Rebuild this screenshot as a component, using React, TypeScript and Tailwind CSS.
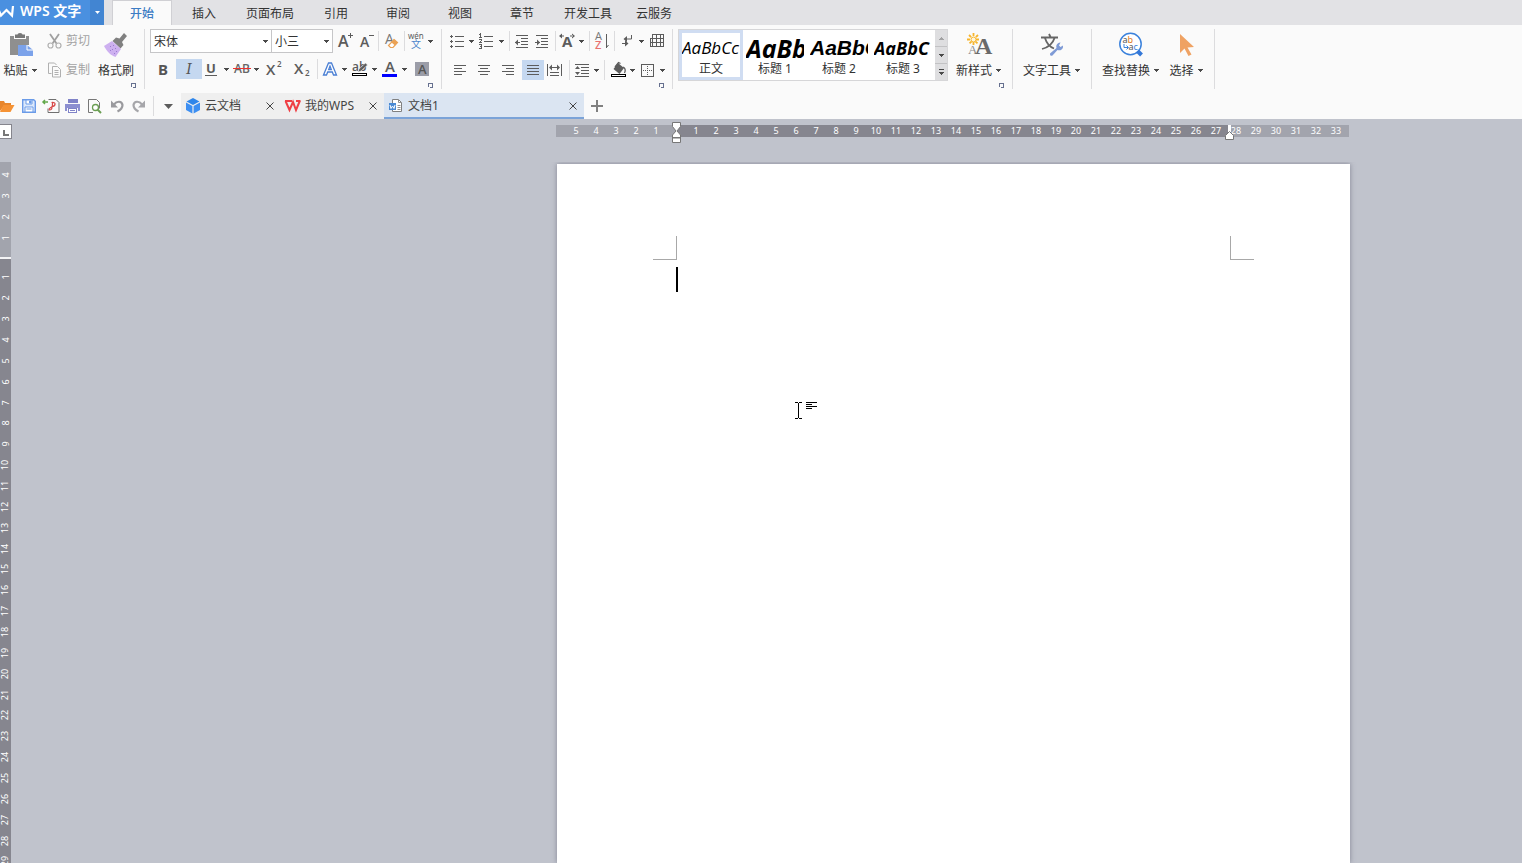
import React, { type ReactNode } from "react";

const G = "#5c5c5c";

function Caret({ className = "" }: { className?: string }) {
  return (
    <svg className={`h-[3px] w-[5px] shrink-0 ${className}`} viewBox="0 0 5 3" fill="#4a4a4a" shapeRendering="crispEdges">
      <path d="M0 0h5v1h-1v1h-1v1h-1v-1h-1v-1h-1z" />
    </svg>
  );
}

function Tool({ label, w, on, children }: { label: string; w: string; on?: boolean; children: ReactNode }) {
  return (
    <button
      aria-label={label}
      title={label}
      className={`flex h-5 shrink-0 items-center justify-center ${w} ${on ? "bg-[#c5d8f0]" : ""}`}
    >
      {children}
    </button>
  );
}

function Sep({ w }: { w: string }) {
  return (
    <div className={`flex h-5 shrink-0 justify-center ${w}`}>
      <div className="w-px bg-[#dcdcde]" />
    </div>
  );
}

function Art({ w, h, children }: { w: number; h: number; children: ReactNode }) {
  return (
    <svg width={w} height={h} viewBox={`0 0 ${w} ${h}`} fill="none" className="shrink-0 overflow-visible" aria-hidden="true">
      {children}
    </svg>
  );
}

/* Horizontal strokes given as [x, y, width] triples. */
function Bars({ rows, fill = G }: { rows: number[][]; fill?: string }) {
  return (
    <g fill={fill} shapeRendering="crispEdges">
      {rows.map(([x, y, w], i) => (
        <rect key={i} x={x} y={y} width={w} height={1} />
      ))}
    </g>
  );
}

function Launcher({ className }: { className: string }) {
  return (
    <button aria-label="更多设置" className={`absolute bottom-0 ${className}`}>
      <svg className="h-[6px] w-[6px]" viewBox="0 0 6 6" shapeRendering="crispEdges" fill="#66708f">
        <path d="M0 0h5v1h-4v3h-1zM2 5h3v-3h-1v2h-2zM5 2h-1v-1h1z" />
      </svg>
    </button>
  );
}

function Group({ className, children }: { className: string; children: ReactNode }) {
  return <section className={`relative h-[60px] shrink-0 border-r border-[#dcdcde] ${className}`}>{children}</section>;
}

function Big({ icon, label, caret, className = "" }: { icon: ReactNode; label: string; caret?: boolean; className?: string }) {
  return (
    <button className={`flex shrink-0 flex-col items-center whitespace-nowrap text-[#333] ${className}`}>
      <span className="flex h-8 items-center">{icon}</span>
      <span className="flex h-[19px] items-center gap-1">
        {label}
        {caret && <Caret />}
      </span>
    </button>
  );
}

const PasteIcon = (
  <Art w={23} h={24}>
    <path d="M1 3h4v3h12v-3h3v9h-5v10h-14z" fill="#8f8f8f" />
    <path d="M6 1.5h2.500a2.500 1.500 0 0 1 5 0h2.500v3.500h-10z" fill="#777" />
    <path d="M9 12h9l6 5v6h-15z" fill="#7ba2ea" />
    <path d="M18 12v5h6" stroke="#fff" strokeWidth="1" />
  </Art>
);

const BrushIcon = (
  <Art w={24} h={24}>
    <path d="M20 0l3 3-5 6 1.500 3-3 3.500-8-7.500 3.500-3.500 3.500 1z" fill="#808080" />
    <path d="M8 8l9 8-5.500 8c-5-1.500-9-6-11.500-11z" fill="#cdb0f0" />
    <g fill="#9b7bd0">
      {[[6, 13], [9, 12], [11, 15], [8, 16], [12, 18], [10, 20], [6, 17]].map(([x, y], i) => (
        <rect key={i} x={x} y={y} width="1" height="1" />
      ))}
    </g>
  </Art>
);

const TextToolIcon = (
  <Art w={24} h={24}>
    <path d="M1 4.500h17M9 1l1.500 3M5 5c1.500 5 5 9 9 10.500M14.500 5c-1.500 5-5 9-12.500 11" stroke="#666" strokeWidth="1.800" />
    <path d="M10 20.500l6.500-5.500a4 4 0 0 1 4-5.500l-1.500 3 1.500 1.500 2.500-1.500a4 4 0 0 1-5.500 4.500l-5 5.500q-3 1-2.500-2z" fill="#7f9bd6" />
  </Art>
);

const FindIcon = (
  <Art w={25} h={26}>
    <circle cx="12.500" cy="12" r="10.700" stroke="#3b82dc" strokeWidth="1.500" fill="#fff" />
    <path d="M19.500 19l4 4" stroke="#3478d8" strokeWidth="4" />
    <text x="4.500" y="10.500" fontSize="9" fontFamily="Noto Sans" fill="#555">a<tspan fill="#e07a20">b</tspan></text>
    <text x="10.500" y="18" fontSize="9" fontFamily="Noto Sans" fill="#555">a<tspan fill="#3b82dc">c</tspan></text>
    <path d="M6 12v3.500h4M8.500 13.500l2 2-2 2" stroke="#3b82dc" />
  </Art>
);

const SelectIcon = (
  <Art w={12} h={22}>
    <path d="M0 0v19l4.500-4.500 4 7.500 3-1.500-4-7 6.500-.5z" fill="#efa263" />
  </Art>
);

const NewStyleIcon = (
  <Art w={24} h={24}>
    <g stroke="#f7b52c" strokeWidth="1.800" strokeDasharray="3 1.500">
      <path d="M6.500 0v13M0 6.500h13M2 2l9 9M11 2l-9 9" />
    </g>
    <circle cx="6.500" cy="6.500" r="2.500" fill="#fff6dc" stroke="#f7b52c" />
    <text x="1" y="21" fontSize="13" fontFamily="Liberation Serif" fill="#8a8a8a">A</text>
    <text x="8" y="21" fontSize="24" fontFamily="Liberation Serif" fontWeight="700" fill="#6a6a6a">A</text>
  </Art>
);

function Ribbon() {
  return (
    <div className="flex h-[68px] shrink-0 bg-[#fafafa] pt-1 text-[12px] leading-5 text-[#333]">
      <Group className="flex w-[145px]">
        <Big icon={PasteIcon} label="粘贴" caret className="w-10" />
        <div className="ml-[7px] flex w-12 flex-col gap-2 pt-px text-[#a3a3a3]">
          <button className="flex h-[22px] items-center gap-1 whitespace-nowrap">
            <Art w={15} h={16}>
              <path d="M3 1l6.500 9.500M12 1l-6.500 9.500" stroke="#a0a0a0" strokeWidth="1.800" />
              <circle cx="3.500" cy="12.500" r="2.500" stroke="#b0b0b0" strokeWidth="1.200" />
              <circle cx="11.500" cy="12.500" r="2.500" stroke="#b0b0b0" strokeWidth="1.200" />
            </Art>
            剪切
          </button>
          <button className="flex h-[20px] items-center gap-1 whitespace-nowrap">
            <Art w={15} h={16}>
              <path d="M4.500 11.500h-3v-10.500h6l2 2M5.500 4.500h5l3 3v7.500h-8zM7.500 8.500h4M7.500 10.500h4M7.500 12.500h4" stroke="#b0b0b0" />
            </Art>
            复制
          </button>
        </div>
        <Big icon={BrushIcon} label="格式刷" className="w-[42px]" />
        <Launcher className="right-[7px]" />
      </Group>

      <Group className="w-[297px] pl-[5px]">
        <div className="flex h-6 items-center">
          <label className="relative flex items-center">
            <select aria-label="字体" className="h-6 w-[122px] appearance-none border border-[#c6c6c8] bg-white pt-px pl-[3px] text-[12px] outline-none">
              <option>宋体</option>
              <option>黑体</option>
            </select>
            <Caret className="pointer-events-none absolute right-1" />
          </label>
          <label className="relative -ml-px flex items-center">
            <select aria-label="字号" className="h-6 w-[62px] appearance-none border border-[#c6c6c8] bg-white pt-px pl-[3px] text-[12px] outline-none">
              <option>小三</option>
              <option>四号</option>
            </select>
            <Caret className="pointer-events-none absolute right-1" />
          </label>
          <Tool label="增大字号" w="w-6">
            <Art w={16} h={18}>
              <text x="1" y="15" fontSize="16" fontWeight="600" fontFamily="Open Sans" fill={G}>A</text>
              <path d="M11 3.500h5M13.500 1v5" stroke={G} />
            </Art>
          </Tool>
          <Tool label="减小字号" w="w-5">
            <Art w={16} h={18}>
              <text x="1" y="15" fontSize="14" fontWeight="600" fontFamily="Open Sans" fill={G}>A</text>
              <path d="M10 3.500h5" stroke={G} />
            </Art>
          </Tool>
          <Sep w="w-0.5" />
          <Tool label="清除格式" w="w-6">
            <Art w={14} h={18}>
              <text x="1" y="12" fontSize="14" fontFamily="Open Sans" fill="#777">A</text>
              <path d="M10 7.500l3.500 3-4.500 5h-2.500l-2-2z" fill="#fff" stroke="#eba254" strokeWidth="1.200" />
              <path d="M10 7.500l3.500 3-2.500 3-3.500-3z" fill="#eba254" />
            </Art>
          </Tool>
          <Sep w="w-0.5" />
          <Tool label="拼音指南" w="w-[22px]">
            <Art w={14} h={18}>
              <text x="-1" y="7" fontSize="8" fontFamily="Noto Sans" fill={G}>wén</text>
              <text x="2" y="16" fontSize="10" fontFamily="Noto Sans CJK SC" fill="#4d86cc">文</text>
            </Art>
          </Tool>
          <Tool label="拼音选项" w="w-1.5"><Caret /></Tool>
        </div>
        <div className="mt-1.5 flex h-5">
          <Tool label="加粗" w="w-[26px]"><b className="font-['Noto_Sans',sans-serif] text-[15px] text-[#555]">B</b></Tool>
          <Tool label="倾斜" w="w-[26px]" on><i className="font-['DejaVu_Serif',serif] text-[14px] text-[#555]">I</i></Tool>
          <Tool label="下划线" w="w-[18px]">
            <Art w={12} h={16}>
              <text x="1" y="12" fontSize="13" fontWeight="700" fontFamily="Open Sans" fill={G}>U</text>
              <Bars rows={[[0, 14, 12]]} />
            </Art>
          </Tool>
          <Tool label="下划线选项" w="w-3"><Caret /></Tool>
          <Tool label="删除线" w="w-5">
            <Art w={18} h={16}>
              <text x="1" y="12" fontSize="12" fontWeight="600" fontFamily="Open Sans" fill="#666">AB</text>
              <path d="M0 7.500h18" stroke="#f03030" strokeWidth="1" />
            </Art>
          </Tool>
          <Tool label="删除线选项" w="w-2"><Caret /></Tool>
          <Tool label="上标" w="w-7">
            <Art w={16} h={18}>
              <text x="0" y="15" fontSize="15" fontWeight="600" fontFamily="Open Sans" fill={G}>X</text>
              <text x="11" y="7" fontSize="8" fontWeight="600" fontFamily="Open Sans" fill={G}>2</text>
            </Art>
          </Tool>
          <Tool label="下标" w="w-7">
            <Art w={16} h={18}>
              <text x="0" y="14" fontSize="15" fontWeight="600" fontFamily="Open Sans" fill={G}>X</text>
              <text x="11" y="16" fontSize="8" fontWeight="600" fontFamily="Open Sans" fill={G}>2</text>
            </Art>
          </Tool>
          <Sep w="w-0.5" />
          <Tool label="文字效果" w="w-6">
            <Art w={16} h={16}>
              <path d="M1.500 14l5-12h3l5 12h-3l-1.200-3h-4.600l-1.200 3zM6.700 8.500h2.600l-1.300-3.500z" stroke="#4a7fd4" strokeWidth="1.300" fill="#fff" />
            </Art>
          </Tool>
          <Tool label="文字效果选项" w="w-1"><Caret /></Tool>
          <Tool label="突出显示" w="w-[26px]">
            <Art w={15} h={16}>
              <text x="0" y="10" fontSize="12" fontWeight="600" fontFamily="Open Sans" fill={G}>ab</text>
              <path d="M6 11l1-3 6.500-6 2 2-6.500 6z" fill={G} stroke="#fafafa" strokeWidth=".5" />
              <rect x=".5" y="12.500" width="14" height="2" stroke="#000" fill="#fff" />
            </Art>
          </Tool>
          <Tool label="突出显示选项" w="w-1"><Caret /></Tool>
          <Tool label="字体颜色" w="w-[26px]">
            <Art w={15} h={16}>
              <text x="3" y="11" fontSize="15" fontWeight="600" fontFamily="Open Sans" fill={G}>A</text>
              <rect y="13" width="15" height="3" fill="#00f" />
            </Art>
          </Tool>
          <Tool label="字体颜色选项" w="w-1"><Caret /></Tool>
          <Tool label="字符底纹" w="w-8">
            <Art w={14} h={14}>
              <rect width="14" height="14" fill="#9b9da8" />
              <text x="3" y="12" fontSize="13" fontWeight="600" fontFamily="Open Sans" fill="#555">A</text>
            </Art>
          </Tool>
        </div>
        <Launcher className="right-[7px]" />
      </Group>

      <Group className="w-[231px] pl-1">
        <div className="flex h-6 items-center">
          <Tool label="项目符号" w="w-[22px]">
            <Art w={14} h={14}>
              <Bars rows={[[5, 2, 9], [5, 7, 9], [5, 12, 9], [0, 2, 3], [0, 7, 3], [0, 12, 3]]} />
              <path d="M1 1h1v3h-1zM1 6h1v3h-1zM1 11h1v3h-1z" fill={G} shapeRendering="crispEdges" />
            </Art>
          </Tool>
          <Tool label="项目符号选项" w="w-1.5"><Caret /></Tool>
          <Tool label="编号" w="w-6">
            <Art w={14} h={16}>
              <Bars rows={[[5, 3, 9], [5, 8, 9], [5, 13, 9], [0, 4, 3], [0, 1, 1], [0, 6, 3], [1, 8, 1], [0, 9, 3], [0, 11, 3], [1, 13, 2], [0, 15, 3]]} />
              <path d="M1 0h1v4h-1zM2 7h1v1h-1zM2 11h1v4h-1z" fill={G} shapeRendering="crispEdges" />
            </Art>
          </Tool>
          <Tool label="编号选项" w="w-1.5"><Caret /></Tool>
          <Sep w="w-2.5" />
          <Tool label="减少缩进量" w="w-4">
            <Art w={14} h={14}>
              <Bars rows={[[1, 1, 12], [6, 4, 7], [6, 7, 7], [6, 10, 7], [1, 13, 12], [0, 8, 5]]} />
              <path d="M3 5.500v6l-3-3z" fill={G} />
            </Art>
          </Tool>
          <Tool label="增加缩进量" w="w-6">
            <Art w={14} h={14}>
              <Bars rows={[[1, 1, 12], [6, 4, 7], [6, 7, 7], [6, 10, 7], [1, 13, 12], [0, 8, 5]]} />
              <path d="M2 5.500v6l3-3z" fill={G} />
            </Art>
          </Tool>
          <Sep w="w-0.5" />
          <Tool label="字符缩放" w="w-[22px]">
            <Art w={16} h={16}>
              <text x="3" y="14" fontSize="15" fontWeight="700" fontFamily="Open Sans" fill={G}>A</text>
              <path d="M0 3l3-2.500v5zM16 3l-3-2.500v5zM2 2.500h3v1h-3zM11 2.500h3v1h-3z" fill={G} />
            </Art>
          </Tool>
          <Tool label="字符缩放选项" w="w-1.5"><Caret /></Tool>
          <Sep w="w-2.5" />
          <Tool label="排序" w="w-3.5">
            <Art w={14} h={18}>
              <text x="1" y="8" fontSize="11" fontFamily="Open Sans" fill="#777">A</text>
              <text x="1" y="17" fontSize="11" fontWeight="600" fontFamily="Open Sans" fill="#e8716f">Z</text>
              <path d="M12.500 2v14M12.500 15.500l2-2.500" stroke={G} />
            </Art>
          </Tool>
          <Sep w="w-3" />
          <Tool label="显示段落标记" w="w-3.5">
            <Art w={12} h={14}>
              <path d="M10.500 1v4h-6M1 9.500h5" stroke={G} />
              <path d="M6 2v6l-3.500-3zM4 6.500v6l3.500-3z" fill={G} />
            </Art>
          </Tool>
          <Tool label="段落标记选项" w="w-3.5"><Caret /></Tool>
          <Tool label="表格" w="w-[18px]">
            <Art w={14} h={14}>
              <path d="M2.500.5h11v12h-11zM6.500.5v12M10.500.5v12M0 4.500h13.500M0 8.500h13.500M.5 12.500h2M.5 4v9" stroke={G} shapeRendering="crispEdges" />
            </Art>
          </Tool>
        </div>
        <div className="mt-[7px] flex h-5">
          <Tool label="左对齐" w="w-7">
            <Art w={12} h={12}><Bars rows={[[0, 1, 12], [0, 4, 8], [0, 7, 12], [0, 10, 8]]} /></Art>
          </Tool>
          <Tool label="居中" w="w-5">
            <Art w={12} h={12}><Bars rows={[[0, 1, 12], [2, 4, 8], [0, 7, 12], [2, 10, 8]]} /></Art>
          </Tool>
          <Tool label="右对齐" w="w-7">
            <Art w={12} h={12}><Bars rows={[[0, 1, 12], [4, 4, 8], [0, 7, 12], [4, 10, 8]]} /></Art>
          </Tool>
          <Tool label="两端对齐" w="w-[22px]" on>
            <Art w={12} h={12}><Bars rows={[[0, 1, 12], [0, 4, 12], [0, 7, 12], [0, 10, 12]]} /></Art>
          </Tool>
          <Tool label="分散对齐" w="w-5">
            <Art w={15} h={12}>
              <path d="M.5 0v12M14.500 0v12" stroke={G} />
              <Bars rows={[[3, 3, 9], [3, 8, 9], [3, 11, 9]]} />
              <path d="M5 .5v6l-3-3zM10 .5v6l3-3z" fill={G} />
            </Art>
          </Tool>
          <Sep w="w-2.5" />
          <Tool label="行距" w="w-4">
            <Art w={15} h={13}>
              <Bars rows={[[0, 0, 14], [6, 3, 8], [6, 6, 8], [6, 9, 8], [0, 12, 14]]} />
              <path d="M0 5l2.500-3 2.500 3zM0 8l2.500 3 2.500-3z" fill={G} />
            </Art>
          </Tool>
          <Tool label="行距选项" w="w-3"><Caret /></Tool>
          <Sep w="w-1" />
          <Tool label="底纹颜色" w="w-6">
            <Art w={15} h={16}>
              <path d="M7 1l6 5-4.500 6-6-5z" fill={G} />
              <path d="M4 5l3.500-4.500 2 1M12 5c2 1 3 3 1.500 6" stroke={G} strokeWidth="1.300" />
              <rect x=".5" y="12.500" width="14" height="2" stroke="#000" fill="#fff" />
            </Art>
          </Tool>
          <Tool label="底纹选项" w="w-1"><Caret /></Tool>
          <Tool label="边框" w="w-[26px]">
            <Art w={13} h={13}>
              <rect x=".5" y=".5" width="12" height="12" stroke={G} />
              <path d="M6.500 2v9M2 6.500h9" stroke={G} strokeDasharray="1 1" />
            </Art>
          </Tool>
          <Tool label="边框选项" w="w-1"><Caret /></Tool>
        </div>
        <Launcher className="right-[7px]" />
      </Group>

      <Group className="flex w-[340px] pl-[5px]">
        <div className="flex h-[52px] border border-[#d6d6d8] bg-white">
          <StyleCell name="正文" on sample="font-['Open_Sans',sans-serif] text-[17px] italic" text="AaBbCc" />
          <StyleCell name="标题 1" sample="font-['Open_Sans',sans-serif] text-[25px] font-bold italic" text="AaBb" />
          <StyleCell name="标题 2" sample="font-['Liberation_Sans',sans-serif] text-[21px] font-bold italic" text="AaBbC" />
          <StyleCell name="标题 3" sample="font-['Open_Sans',sans-serif] text-[18px] font-bold italic" text="AaBbC" />
          <div className="flex w-3 flex-col divide-y divide-[#c2c2c4] bg-[#dedee0]">
            <button aria-label="上一行" className="flex flex-1 items-center justify-center"><Caret className="rotate-180 opacity-40" /></button>
            <button aria-label="下一行" className="flex flex-1 items-center justify-center"><Caret /></button>
            <button aria-label="全部样式" className="flex flex-1 flex-col items-center justify-center gap-0.5">
              <span className="h-px w-[5px] bg-[#4a4a4a]" />
              <Caret />
            </button>
          </div>
        </div>
        <Big icon={NewStyleIcon} label="新样式" caret className="ml-1 w-[53px]" />
        <Launcher className="right-[7px]" />
      </Group>
      <Group className="flex w-[79px] pl-[9px]">
        <Big icon={TextToolIcon} label="文字工具" caret className="w-[59px]" />
      </Group>
      <Group className="flex w-[123px] pl-[9px]">
        <Big icon={FindIcon} label="查找替换" caret className="w-[59px]" />
        <Big icon={SelectIcon} label="选择" caret className="ml-2 w-9" />
      </Group>
    </div>
  );
}

function StyleCell({ name, text, sample, on }: { name: string; text: string; sample: string; on?: boolean }) {
  return (
    <button className={`flex w-16 flex-col items-center border-[3px] ${on ? "border-[#d0ddf2]" : "border-transparent"}`}>
      <span className={`h-7 w-full shrink-0 overflow-hidden text-left leading-[30px] whitespace-nowrap text-black ${sample}`}>{text}</span>
      <span className="text-[12px] leading-4">{name}</span>
    </button>
  );
}

const menus = ["插入", "页面布局", "引用", "审阅", "视图", "章节", "开发工具", "云服务"];

function TitleBar() {
  return (
    <header className="flex h-[25px] shrink-0 bg-[#e2e2e5] text-[12px] text-[#333]">
      <div className="flex w-[104px] shrink-0 bg-[#4a90e0] text-white">
        <div className="flex w-[90px] items-center gap-1.5 pb-1">
          <Art w={14} h={16}>
            <path d="M-3 3l4 9.500 5.500-5.500 5.500 5.500 1-9.500" stroke="#fff" strokeWidth="2.200" />
          </Art>
          <span className="font-['Noto_Sans','Noto_Sans_CJK_SC',sans-serif] text-[14px] font-semibold whitespace-nowrap">WPS 文字</span>
        </div>
        <button aria-label="应用菜单" className="flex w-3.5 items-center justify-center bg-[#4285d2]">
          <svg className="h-[3px] w-[5px]" viewBox="0 0 5 3" fill="#fff"><path d="M0 0h5l-2.500 3z" /></svg>
        </button>
      </div>
      <nav className="flex pl-2">
        <button className="mr-px w-[60px] border border-b-0 border-[#d0d0d4] bg-[#fafafa] pt-px font-medium text-[#3c7cc4]">开始</button>
        {menus.map((m) => (
          <button key={m} className="min-w-[62px] px-[11px] pt-0.5 whitespace-nowrap">{m}</button>
        ))}
      </nav>
    </header>
  );
}

function CloseX() {
  return (
    <button aria-label="关闭" className="flex h-4 w-4 items-center justify-center">
      <Art w={8} h={8}><path d="M.5.500l7 7M7.500.5l-7 7" stroke="#444" /></Art>
    </button>
  );
}

function QuickBar() {
  return (
    <div className="flex h-[26px] shrink-0 items-center bg-[#fafafa] text-[12px] text-[#444]">
      <div className="flex items-center">
        <Tool label="打开" w="w-[18px]">
          <Art w={18} h={14}>
            <path d="M0 2h4l1 2h6v3h-7l-4 5z" fill="#e8862c" />
            <path d="M3.500 6h11l-4 7h-10.500z" fill="#f59234" />
          </Art>
        </Tool>
        <Tool label="保存" w="w-[22px]">
          <Art w={14} h={14}>
            <path d="M.7.700h11l1.600 1.600v11h-12.600z" stroke="#6b9be8" strokeWidth="1.400" fill="#dbe8fb" />
            <path d="M4 1h6v4h-6zM3 8h8v5h-8z" fill="#fff" stroke="#6b9be8" />
            <path d="M7.500 2h1.500v2h-1.500zM4.500 10h5" fill="#6b9be8" stroke="#6b9be8" />
          </Art>
        </Tool>
        <Tool label="输出为PDF" w="w-[22px]">
          <Art w={17} h={16}>
            <path d="M5.500 1.500h7.500l3 3v10h-11v-4" stroke="#707070" />
            <path d="M8.500 4.500c5-1 4.500 4 0 4M9.500 5c0 4-1 7-2.500 7s-1-2 2.500-3.500" stroke="#d84848" strokeWidth="1.200" />
            <path d="M1 4h4M2 2l-2 2 2 2" stroke="#62a84a" strokeWidth="1.500" />
          </Art>
        </Tool>
        <Tool label="打印" w="w-[22px]">
          <Art w={16} h={15}>
            <path d="M3 0h10v4h-10z" fill="#8083c8" />
            <path d="M0 5h15v7h-2v-3h-11v3h-2z" fill="#8c8fd0" />
            <rect x="3.500" y="9.500" width="8" height="4" fill="#fff" stroke="#8083c8" />
            <path d="M5 11.500h5" stroke="#8083c8" />
          </Art>
        </Tool>
        <Tool label="打印预览" w="w-[21px]">
          <Art w={15} h={16}>
            <path d="M6 14.500h-4.500v-13h8l3 3v6" stroke="#777" />
            <circle cx="8.500" cy="9.500" r="3" stroke="#6a9e52" strokeWidth="1.300" fill="#fff" />
            <path d="M10.500 11.500l3.500 3.500" stroke="#6a9e52" strokeWidth="2" />
          </Art>
        </Tool>
        <Tool label="撤销" w="w-[23px]">
          <Art w={12} h={14}>
            <path d="M3 5.500c3-4 8-3.500 8.500.5 0 3-2 5-5 6.500" stroke="#9a9a9e" strokeWidth="2.200" />
            <path d="M0 1.500v7h7z" fill="#9a9a9e" />
          </Art>
        </Tool>
        <Tool label="恢复" w="w-[22px]">
          <Art w={14} h={14}>
            <path d="M10 5.500c-3-4-8-3.500-8.500.5 0 3 2 5 5 6.500" stroke="#a6a6aa" strokeWidth="2.200" />
            <path d="M13 1.500v7h-7z" fill="#a6a6aa" />
          </Art>
        </Tool>
        <Sep w="w-1.5" />
        <Tool label="自定义快速访问" w="w-[25px]">
          <Art w={9} h={5}><path d="M0 0h9l-4.500 5z" fill="#5c5c5c" /></Art>
        </Tool>
      </div>
      <div className="flex h-full">
        <div className="flex w-[99px] items-center bg-[#efefef] pr-0.5 pl-1">
          <Art w={16} h={16}>
            <path d="M8 0l6.500 3.500-6.500 3.500-6.500-3.500z" fill="#2f86ea" />
            <path d="M1 4.500l6.400 3.500v7.500l-6.400-3.500zM15 4.500l-6.400 3.500v7.500l6.400-3.500z" fill="#3d8ff2" />
          </Art>
          <span className="ml-1 grow whitespace-nowrap">云文档</span>
          <CloseX />
        </div>
        <div className="flex w-[104px] items-center bg-[#efefef] pr-[3px] pl-1">
          <Art w={17} h={14}>
            <path d="M1.500 2l4 9 3.500-8 3 8 4-9.500M1 2h7M12 2h4.500" stroke="#ef3f45" strokeWidth="2" />
          </Art>
          <span className="ml-1 grow whitespace-nowrap">我的WPS</span>
          <CloseX />
        </div>
        <div className="flex w-[200px] items-center border-b-2 border-[#7ba3d8] bg-[#dbe5f2] pt-0.5 pr-[3px] pl-1">
          <Art w={16} h={16}>
            <path d="M4.500 5v-3.500h6l3 3v9h-9v-2" stroke="#808080" fill="#fff" />
            <path d="M10.500 1.500v3h3M9.500 7.500h3M9.500 9.500h3M9.500 11.500h3" stroke="#909090" />
            <rect x="1" y="5" width="7" height="7" fill="#4a8ad4" />
            <path d="M2 7l1 3.500 1.500-2.500 1.500 2.500 1-3.500" stroke="#fff" />
          </Art>
          <span className="ml-1 grow whitespace-nowrap">文档1</span>
          <CloseX />
        </div>
      </div>
      <button aria-label="新建" className="flex w-[26px] items-center justify-center">
        <Art w={12} h={12}><path d="M6 0v12M0 6h12" stroke="#808080" strokeWidth="2" /></Art>
      </button>
    </div>
  );
}

const range = (from: number, to: number) =>
  Array.from({ length: Math.abs(to - from) + 1 }, (_, i) => from + i * Math.sign(to - from));

function Ticks({ values }: { values: number[] }) {
  return (
    <>
      {values.map((v) => (
        <span key={v} className="w-5 shrink-0 text-center">{v}</span>
      ))}
    </>
  );
}

function HorizontalRuler() {
  return (
    <div className="relative flex h-3 w-[793px] shrink-0 text-[9px] leading-3 text-white">
      <div className="flex w-[120px] bg-[#a2a4ad] pl-2.5"><Ticks values={range(5, 1)} /></div>
      <div className="flex w-[554px] bg-[#86868f] pl-2.5"><Ticks values={range(1, 27)} /></div>
      <div className="flex grow bg-[#a2a4ad]">
        <div className="-ml-1 flex"><Ticks values={range(28, 33)} /></div>
      </div>
      <svg className="absolute -top-[3px] left-[116px] h-[23px] w-[9px]" viewBox="0 0 9 23" fill="#fff" stroke="#777">
        <path d="M.5.500h8v4l-3.500 4.500 3.500 4v3h-8v-3l3.500-4-3.500-4.500zM.5 15.500h8v5h-8z" />
      </svg>
      <svg className="absolute top-0 left-[669px] h-[16px] w-[9px]" viewBox="0 0 9 16" fill="#fff">
        <path d="M3 0h3v8h-3z" />
        <path d="M.5 14.500v-4l4-4 4 4v4z" stroke="#777" />
      </svg>
    </div>
  );
}

function VerticalTicks({ values }: { values: number[] }) {
  return (
    <>
      {values.map((v) => (
        <span key={v} className="flex min-h-0 flex-1 items-center justify-center">
          <span className="-rotate-90">{v}</span>
        </span>
      ))}
    </>
  );
}

function VerticalRuler() {
  return (
    <div className="flex w-[11px] shrink-0 flex-col text-[9px] leading-3 text-white">
      <div className="flex h-[95px] shrink-0 flex-col bg-[#a2a4ad] pt-0.5 pb-[9px]"><VerticalTicks values={range(4, 1)} /></div>
      <div className="h-0.5 shrink-0 bg-[#f4f4f6]" />
      <div className="grow bg-[#86868f] pt-2">
        <div className="flex h-[605px] flex-col"><VerticalTicks values={range(1, 29)} /></div>
      </div>
    </div>
  );
}

function Page() {
  return (
    <article className="relative mt-0.5 w-[793px] shrink-0 bg-white pt-[72px] shadow-[0_0_5px_rgba(90,92,110,0.6)]">
      <div className="flex justify-between px-24">
        <span className="h-6 w-6 border-r border-b border-[#a8a8a8]" />
        <span className="h-6 w-6 border-b border-l border-[#a8a8a8]" />
      </div>
      <div className="mt-[7px] ml-[119px] h-[25px] w-0.5 bg-black" />
      <svg className="absolute top-[238px] left-[238px] h-[18px] w-[24px]" viewBox="0 0 24 18" fill="#000" shapeRendering="crispEdges">
        <path d="M0 0h3v1h-3zM4 0h3v1h-3zM3 1h1v15h-1zM0 16h3v1h-3zM4 16h3v1h-3zM11 0h11v1h-11zM11 2h6v1h-6zM11 4h11v1h-11zM11 6h6v1h-6z" />
      </svg>
    </article>
  );
}

export default function App() {
  return (
    <div className="flex h-screen flex-col overflow-hidden bg-[#c0c3cc] font-['Noto_Sans','Noto_Sans_CJK_SC',sans-serif]">
      <TitleBar />
      <Ribbon />
      <QuickBar />
      <main className="flex min-h-0 grow flex-col">
        <div className="flex h-[43px] shrink-0 pt-1.5">
          <button aria-label="制表符" className="-mt-px flex h-[15px] w-3 items-end border border-l-0 border-[#85858d] bg-white pb-0.5 pl-[3px]">
            <span className="h-1.5 w-1.5 border-b-2 border-l-2 border-[#777]" />
          </button>
          <div className="grow-[544] basis-0" />
          <HorizontalRuler />
          <div className="grow-[173] basis-0" />
        </div>
        <div className="flex min-h-0 grow overflow-hidden">
          <VerticalRuler />
          <div className="grow-[546] basis-0" />
          <Page />
          <div className="grow-[172] basis-0" />
        </div>
      </main>
    </div>
  );
}
